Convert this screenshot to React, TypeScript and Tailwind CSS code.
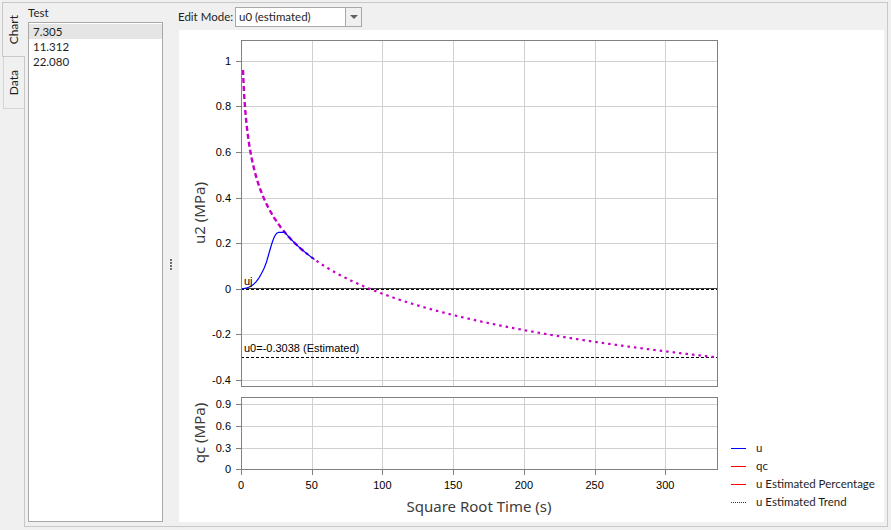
import React from "react";

// plot mapping (svg coords, origin = top-left of the white chart area)
const X = (t: number) => 62 + t * 1.4143;
const Y1 = (v: number) => 258.7 - v * 227.85;
const Y2 = (v: number) => 439.3 - v * 72.2;
const trend = (t: number) => 1.037 - 0.23 * Math.log(t);
const px = (n: number) => Math.round(n) + 0.5;

const pathFrom = (pts: [number, number][]) =>
  pts.map(([x, y], i) => `${i ? "L" : "M"}${x.toFixed(2)} ${y.toFixed(2)}`).join(" ");

const sample = (a: number, b: number, step: number) => {
  const pts: [number, number][] = [];
  for (let t = a; t <= b + 1e-9; t += step) pts.push([X(t), Y1(trend(t))]);
  return pts;
};

const dashedTrend = pathFrom(sample(1.4, 46, 0.2));
const dottedTrend = pathFrom(sample(46, 336.6, 0.5));

const bluePts: [number, number][] = [
  [62.7, 259],
  [67, 258.2],
  [71, 256.7],
  [74, 254.8],
  [77, 251.8],
  [80, 247.8],
  [82.5, 243.5],
  [85, 238.5],
  [87.5, 232],
  [89.5, 225],
  [91.5, 218],
  [93.5, 211.5],
  [95.5, 206.5],
  [97.5, 203.4],
  [99.5, 202.3],
  [104.3, 202.3],
  ...sample(30.5, 52, 0.5),
];
const bluePath = pathFrom(bluePts);

const xTicks = [0, 50, 100, 150, 200, 250, 300];
const y1Ticks = [1, 0.8, 0.6, 0.4, 0.2, 0, -0.2, -0.4];
const y2Ticks = [0.9, 0.6, 0.3, 0];

const tickFont = { fontFamily: "'Liberation Sans', Arial, sans-serif", fontSize: 11 };
const titleFont = { fontFamily: "'Noto Sans', sans-serif", fontSize: 15 };

function Chart() {
  return (
    <svg width={545} height={492} className="shrink-0">
      {/* grid */}
      {xTicks.slice(1).map((t) => (
        <g key={"g" + t}>
          <line x1={px(X(t))} x2={px(X(t))} y1={10} y2={356} stroke="#d0d0d0" />
          <line x1={px(X(t))} x2={px(X(t))} y1={367} y2={439} stroke="#d0d0d0" />
        </g>
      ))}
      {y1Ticks
        .filter((v) => v !== 0)
        .map((v) => (
          <line key={"h" + v} x1={62} x2={538} y1={px(Y1(v))} y2={px(Y1(v))} stroke="#d0d0d0" />
        ))}
      {y2Ticks
        .filter((v) => v !== 0)
        .map((v) => (
          <line key={"h2" + v} x1={62} x2={538} y1={px(Y2(v))} y2={px(Y2(v))} stroke="#d0d0d0" />
        ))}

      {/* zero line + markers */}
      <line x1={62} x2={538} y1={258.5} y2={258.5} stroke="#404040" />
      <line x1={62} x2={538} y1={259.5} y2={259.5} stroke="#000" strokeDasharray="3 2" />
      <line x1={62} x2={538} y1={327.5} y2={327.5} stroke="#000" strokeDasharray="3 2" />

      {/* curves */}
      <path d={dashedTrend} fill="none" stroke="#c800c8" strokeWidth={2.4} strokeDasharray="5 3" />
      <path d={dottedTrend} fill="none" stroke="#c800c8" strokeWidth={2.2} strokeDasharray="2.5 4" />
      <path d={bluePath} fill="none" stroke="#0000ff" strokeWidth={1.2} />

      <text x={65} y={251} dominantBaseline="central" style={tickFont} fill="#000">
        uj
      </text>
      <text x={65} y={318} dominantBaseline="central" style={tickFont} fill="#000">
        u0=-0.3038 (Estimated)
      </text>

      {/* frames */}
      <rect x={62.5} y={10.5} width={476} height={346} fill="none" stroke="#808080" />
      <rect x={62.5} y={367.5} width={476} height={72} fill="none" stroke="#808080" />

      {/* y ticks main */}
      {y1Ticks.map((v) => (
        <g key={"t" + v}>
          <line x1={57} x2={62} y1={px(Y1(v))} y2={px(Y1(v))} stroke="#808080" />
          <text x={52} y={Y1(v)} textAnchor="end" dominantBaseline="central" style={tickFont} fill="#000">
            {v === 0 ? "0" : String(v)}
          </text>
        </g>
      ))}
      {/* y ticks qc */}
      {y2Ticks.map((v) => (
        <g key={"t2" + v}>
          <line x1={57} x2={62} y1={px(Y2(v))} y2={px(Y2(v))} stroke="#808080" />
          <text x={52} y={Y2(v)} textAnchor="end" dominantBaseline="central" style={tickFont} fill="#000">
            {String(v)}
          </text>
        </g>
      ))}
      {/* x ticks */}
      {xTicks.map((t) => (
        <g key={"x" + t}>
          <line x1={px(X(t))} x2={px(X(t))} y1={439} y2={445} stroke="#808080" />
          <text x={X(t)} y={455} textAnchor="middle" dominantBaseline="central" style={tickFont} fill="#000">
            {t}
          </text>
        </g>
      ))}

      {/* axis titles */}
      <text
        x={20}
        y={183}
        transform="rotate(-90 20 183)"
        textAnchor="middle"
        dominantBaseline="central"
        style={titleFont}
        fill="#3c3c3c"
      >
        u2 (MPa)
      </text>
      <text
        x={20}
        y={403}
        transform="rotate(-90 20 403)"
        textAnchor="middle"
        dominantBaseline="central"
        style={titleFont}
        fill="#3c3c3c"
      >
        qc (MPa)
      </text>
      <text x={300} y={476} textAnchor="middle" dominantBaseline="central" style={titleFont} fill="#3c3c3c">
        Square Root Time (s)
      </text>
    </svg>
  );
}

const legend = [
  { label: "u", color: "border-[#0000ff]", dotted: false },
  { label: "qc", color: "border-[#ff0000]", dotted: false },
  { label: "u Estimated Percentage", color: "border-[#ff0000]", dotted: false },
  { label: "u Estimated Trend", color: "border-[#800080]", dotted: true },
];

function Legend() {
  return (
    <div className="flex flex-col justify-end pb-[11px] ml-[7px]">
      {legend.map((l) => (
        <div key={l.label} className="flex items-center h-[18px] gap-[10px]">
          <span className={`w-[15px] border-t ${l.color} ${l.dotted ? "border-dotted" : "border-solid"}`} />
          <span className="text-[11.5px] text-[#1e1e1e] whitespace-nowrap">{l.label}</span>
        </div>
      ))}
    </div>
  );
}

export default function App() {
  const tests = ["7.305", "11.312", "22.080"];
  return (
    <div className="w-[891px] h-[530px] bg-[#f0f0f0] flex overflow-hidden text-[11.5px] text-[#1e1e1e] font-['Lato',sans-serif]">
      {/* vertical tabs */}
      <div className="w-[24px] flex flex-col pt-[2px] shrink-0">
        <div className="ml-[2px] w-[23px] h-[55px] border-l border-t border-b border-[#c8c8c8] bg-[#f0f0f0] relative z-10 flex items-center justify-center">
          <span className="[writing-mode:vertical-rl] rotate-180 leading-none text-[12px]">Chart</span>
        </div>
        <div className="ml-[3px] w-[21px] h-[52px] border-l border-b border-[#d4d4d4] flex items-center justify-center">
          <span className="[writing-mode:vertical-rl] rotate-180 leading-none text-[12px]">Data</span>
        </div>
      </div>

      {/* tab page */}
      <div className="flex-1 mt-[2px] mb-[3px] mr-[3px] border border-[#c8c8c8] flex">
        {/* test list */}
        <div className="w-[138px] pl-[3px] flex flex-col pb-[4px]">
          <div className="h-[19px] flex items-center">Test</div>
          <div className="flex-1 bg-white border border-[#a8a8a8] pt-px">
            {tests.map((t, i) => (
              <div key={t} className={`h-[15px] flex items-center pl-[4px] ${i === 0 ? "bg-[#e5e5e5]" : ""}`}>
                {t}
              </div>
            ))}
          </div>
        </div>

        {/* splitter */}
        <div className="w-[15px] flex items-center justify-center">
          <div className="flex flex-col gap-[1px]">
            <span className="w-[2px] h-[2px] bg-[#6e6e6e]" />
            <span className="w-[2px] h-[2px] bg-[#6e6e6e]" />
            <span className="w-[2px] h-[2px] bg-[#6e6e6e]" />
            <span className="w-[2px] h-[2px] bg-[#6e6e6e]" />
          </div>
        </div>

        {/* chart panel */}
        <div className="flex-1 flex flex-col pb-[4px] pr-[3px]">
          <div className="h-[27px] flex items-center">
            <span className="w-[57px] shrink-0 whitespace-nowrap">Edit Mode:</span>
            <div className="w-[127px] h-[20px] border border-[#a8a8a8] flex bg-white">
              <span className="flex-1 pl-[3px] flex items-center whitespace-nowrap">u0 (estimated)</span>
              <span className="w-[16px] border-l border-[#a8a8a8] bg-[#f0f0f0] flex items-center justify-center">
                <span className="w-0 h-0 border-l-[4px] border-r-[4px] border-t-[4px] border-l-transparent border-r-transparent border-t-[#606060]" />
              </span>
            </div>
          </div>
          <div className="flex-1 ml-px bg-white flex">
            <Chart />
            <Legend />
          </div>
        </div>
      </div>
    </div>
  );
}
